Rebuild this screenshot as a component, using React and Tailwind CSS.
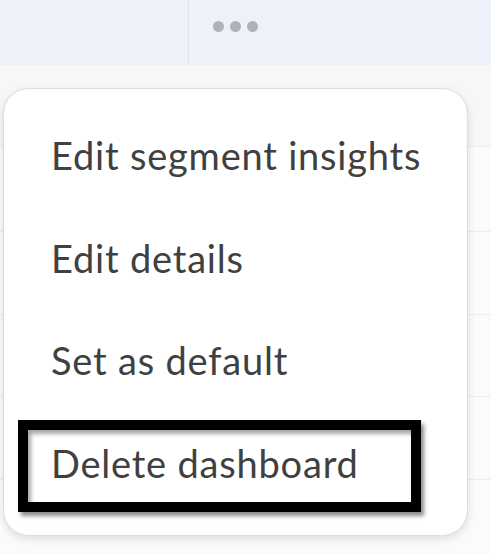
import React from 'react';

const items = ['Edit segment insights', 'Edit details', 'Set as default', 'Delete dashboard'];

const App = () => {
  return (
    <div className="relative w-[496px] h-[554px] bg-white overflow-hidden" style={{ fontFamily: 'Lato, "Open Sans", sans-serif' }}>
      {/* Header bar */}
      <div className="flex h-[65px] w-[491px] bg-[#edf1f9]">
        <div className="w-[189px] border-r border-[#dde1e8]"></div>
        <div className="flex items-start gap-[6px] pl-[24px] pt-[21px]">
          <span className="w-[11px] h-[11px] rounded-full bg-[#b0b2b6]"></span>
          <span className="w-[11px] h-[11px] rounded-full bg-[#b0b2b6]"></span>
          <span className="w-[11px] h-[11px] rounded-full bg-[#b0b2b6]"></span>
        </div>
      </div>

      {/* Table rows behind the menu */}
      <div className="w-[491px]">
        <div className="h-[82px] bg-[#f7f7f7] border-b border-[#ededed]"></div>
        <div className="h-[85px] bg-[#fbfbfb] border-b border-[#ededed]"></div>
        <div className="h-[83px] bg-[#fbfbfb] border-b border-[#ededed]"></div>
        <div className="h-[82px] bg-[#fbfbfb] border-b border-[#ededed]"></div>
        <div className="h-[83px] bg-[#fbfbfb] border-b border-[#ededed]"></div>
        <div className="h-[74px] bg-[#fbfbfb]"></div>
      </div>

      {/* Dropdown menu */}
      <div className="absolute left-[3px] top-[88px] w-[465px] rounded-[26px] border border-[#dedede] bg-white pt-[15px] pb-[21px] shadow-[0_3px_8px_rgba(0,0,0,0.12)]">
        {items.map((label) => (
          <div key={label} className="flex h-[102.5px] items-center pl-[47px] text-[38px] tracking-[0.8px] leading-none text-[#404040]">
            {label}
          </div>
        ))}
        {/* Highlight box around delete */}
        <div className="absolute left-[14px] top-[331px] w-[403px] h-[92px] border-[10px] border-black shadow-[3px_4px_4px_rgba(0,0,0,0.45),inset_3px_4px_4px_rgba(0,0,0,0.35)]"></div>
      </div>
    </div>
  );
};

export default App;
